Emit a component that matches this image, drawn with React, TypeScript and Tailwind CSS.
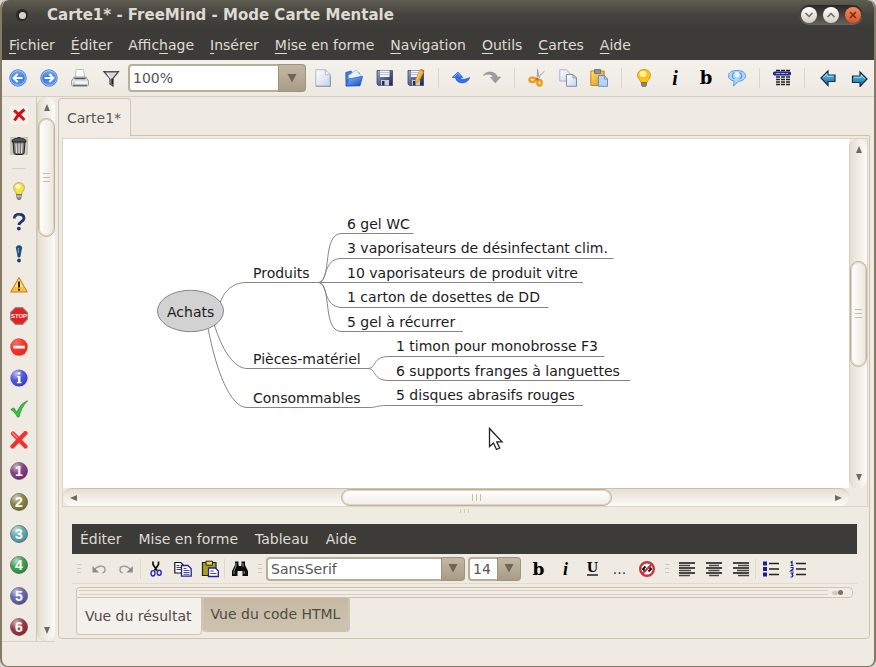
import type { ReactNode } from 'react';

type Kids = { children: ReactNode };

function Icon({ children }: Kids) {
  return (
    <svg width="18" height="18" viewBox="0 0 18 18" fill="none" aria-hidden="true">
      {children}
    </svg>
  );
}

/* ---------- Toolbar icons ---------- */

const Gradients = () => (
  <svg width="0" height="0" className="absolute" aria-hidden="true">
    <defs>
      <linearGradient id="blueBall" x1="0" y1="0" x2="0" y2="1">
        <stop offset="0" stopColor="#7fb0f2" />
        <stop offset="0.5" stopColor="#3a78e0" />
        <stop offset="1" stopColor="#5d9bf0" />
      </linearGradient>
      <linearGradient id="paper" x1="0" y1="0" x2="1" y2="1">
        <stop offset="0" stopColor="#ffffff" />
        <stop offset="1" stopColor="#c9d2ea" />
      </linearGradient>
      <linearGradient id="disk" x1="0" y1="0" x2="1" y2="1">
        <stop offset="0" stopColor="#9aa4cc" />
        <stop offset="1" stopColor="#1c2148" />
      </linearGradient>
      <linearGradient id="folder" x1="0" y1="0" x2="1" y2="1">
        <stop offset="0" stopColor="#8fc1f7" />
        <stop offset="1" stopColor="#1448c8" />
      </linearGradient>
      <linearGradient id="gold" x1="0" y1="0" x2="1" y2="1">
        <stop offset="0" stopColor="#ffe46b" />
        <stop offset="1" stopColor="#e08a12" />
      </linearGradient>
      <linearGradient id="teal" x1="0" y1="0" x2="0" y2="1">
        <stop offset="0" stopColor="#6fc4ea" />
        <stop offset="1" stopColor="#0f6aa8" />
      </linearGradient>
      <radialGradient id="shine" cx="0.35" cy="0.25" r="0.8">
        <stop offset="0" stopColor="#ffffff" stopOpacity="0.65" />
        <stop offset="0.5" stopColor="#ffffff" stopOpacity="0.1" />
        <stop offset="1" stopColor="#000000" stopOpacity="0.15" />
      </radialGradient>
    </defs>
  </svg>
);

const Previous = () => (
  <Icon>
    <circle cx="9" cy="9" r="8.2" fill="url(#blueBall)" stroke="#4a7fdb" />
    <circle cx="9" cy="9" r="7.3" stroke="#b9d3fa" strokeWidth="0.7" />
    <path d="M13.5 9H5M8.6 5 4.6 9l4 4" stroke="#fff" strokeWidth="2.2" />
  </Icon>
);
const Next = () => (
  <Icon>
    <circle cx="9" cy="9" r="8.2" fill="url(#blueBall)" stroke="#4a7fdb" />
    <circle cx="9" cy="9" r="7.3" stroke="#b9d3fa" strokeWidth="0.7" />
    <path d="M4.5 9H13M9.4 5l4 4-4 4" stroke="#fff" strokeWidth="2.2" />
  </Icon>
);
const Printer = () => (
  <Icon>
    <path d="M5 .5h7.5l1 8h-9z" fill="#fdfdfd" stroke="#b5b5b5" strokeWidth="0.8" />
    <path d="M3 8h12l2.5 4v4l-1 1h-15l-1-1v-4z" fill="#dcdcdc" stroke="#8a8a8a" strokeWidth="0.8" />
    <path d="M3.5 9.5h11" stroke="#555" strokeWidth="1.6" />
    <path d="M1.5 12.500h15v2h-15z" fill="#fafafa" />
    <path d="M2 16.500h14" stroke="#6b6b6b" strokeWidth="1.300" />
    <path d="M2 14h2" stroke="#5cd65c" />
  </Icon>
);
const Filter = () => (
  <Icon>
    <path d="M2 2.5h14.5l-5.5 7V17l-3-2V9.5z" fill="#d9d9d9" stroke="#3c3c3c" strokeWidth="1.2" />
    <path d="M3 2.8h12.5" stroke="#555" strokeWidth="1.6" />
    <path d="M10.2 9.5V15" stroke="#222" strokeWidth="1.8" />
    <path d="M5 4.5l3.5 5" stroke="#fff" />
  </Icon>
);
const NewPage = () => (
  <Icon>
    <path d="M1.8.8h9.5l5 5v11.4H1.8z" fill="url(#paper)" stroke="#a9b0c4" strokeWidth="0.9" />
    <path d="M11.3.8v5h5z" fill="#f4f6fc" stroke="#a9b0c4" strokeWidth="0.8" />
    <path d="M2 17.3h14.4V7" stroke="#7f88a6" strokeWidth="0.8" />
  </Icon>
);
const Open = () => (
  <Icon>
    <path d="M.8 3.5 6 2l1.500 2h7v12.500L1 17z" fill="#3d79de" stroke="#2a5ac0" strokeWidth="0.8" />
    <path d="M3.500 6.500 11 1l5.500 6L11 12H4z" fill="#eef2fd" stroke="#9aa9cf" strokeWidth="0.7" />
    <path d="M4.5 9.500c5 0 6-1.500 13-2l-2.500 9.300H1z" fill="url(#folder)" stroke="#1d4fc4" strokeWidth="0.7" />
  </Icon>
);
const DiskBody = () => (
  <>
    <path d="M1 1.5h15.5v15H2.5L1 15z" fill="url(#disk)" stroke="#3b4168" strokeWidth="0.8" />
    <path d="M4 1.5h9.500V8H4z" fill="#f2f4fb" />
    <path d="M4 3.5h9.500M4 5.500h9.500" stroke="#a6acc6" strokeWidth="0.7" />
    <path d="M5 11h8v5.500H5z" fill="#c4cadf" />
    <path d="M6 12h2.500v4.500H6z" fill="#252a50" />
  </>
);
const Save = () => (
  <Icon>
    <DiskBody />
  </Icon>
);
const SaveAs = () => (
  <Icon>
    <DiskBody />
    <path d="M13 .800 16.800 2.800l-5 9.500-3.300 2 .200-4z" fill="url(#gold)" stroke="#c98a1a" strokeWidth="0.6" />
    <path d="M13 .800 16.800 2.800l.700-1.300L14 0z" fill="#e0605a" />
  </Icon>
);
const UndoBlue = () => (
  <Icon>
    <path d="M0 8.500 6 3l5 5.500H8c1 2.400 4.500 2.400 9.800 0-2 7-13.300 7.500-14.300 0z" fill="#2f6ff0" stroke="#1f55cc" strokeWidth="0.6" />
    <path d="M2 7.800 6 4.200l2.500 3" stroke="#86b0ff" />
  </Icon>
);
const RedoGray = () => (
  <Icon>
    <path d="M.3 6.500C3 1.500 12.500 1.500 14.300 8h3.400l-5.500 6L7.500 8h3C9 4.800 4.500 4.500.3 6.500z" fill="#9d9d9d" stroke="#858585" strokeWidth="0.5" />
  </Icon>
);
const Scissors = () => (
  <Icon>
    <path d="M9.500 0 11.500 9 9 10z" fill="#a7abc0" stroke="#85899c" strokeWidth="0.5" />
    <path d="M16.500 2 9.500 10.500l-1.500-1z" fill="#d5d8e6" stroke="#9a9eb2" strokeWidth="0.5" />
    <ellipse cx="4.500" cy="10.800" rx="3.100" ry="2.200" stroke="#f09a16" strokeWidth="2.3" />
    <ellipse cx="11.500" cy="13.800" rx="2.200" ry="2.800" stroke="#f09a16" strokeWidth="2.3" />
    <circle cx="9" cy="10.300" r="1.300" fill="#c06d08" />
  </Icon>
);
const CopyPages = () => (
  <Icon>
    <path d="M.8.800h6.500l3.500 3.500V12H.8z" fill="url(#paper)" stroke="#98a1bd" strokeWidth="0.8" />
    <path d="M7.500 5.500H14l3.500 3.500v8.300h-10z" fill="url(#paper)" stroke="#7580a5" strokeWidth="0.9" />
    <path d="M14 5.500V9h3.500z" fill="#dfe5f5" stroke="#7580a5" strokeWidth="0.7" />
  </Icon>
);
const PasteGold = () => (
  <Icon>
    <path d="M.8 2h13.400v14.500H.8z" fill="url(#gold)" stroke="#c07a14" strokeWidth="0.9" />
    <path d="M4.500.500h6V4.500h-6z" fill="#8e8e98" stroke="#5c5c66" strokeWidth="0.7" />
    <path d="M8.500 6.500h6L17.500 10v7.300h-9z" fill="#b9d2f7" stroke="#5b88cf" strokeWidth="0.9" />
    <path d="M14.300 6.500V10h3" stroke="#5b88cf" strokeWidth="0.8" />
  </Icon>
);
const BulbGold = () => (
  <Icon>
    <path d="M9 .500c4 0 6.500 2.500 6.500 6 0 3-3 4.500-3.500 7H6C5.500 11 2.500 9.500 2.500 6.500c0-3.500 2.500-6 6.500-6z" fill="#fcc414" stroke="#e08c10" strokeWidth="0.9" />
    <ellipse cx="8" cy="5" rx="3.500" ry="3" fill="#fff3a0" />
    <path d="M6.500 13.500h5v3L10 17.700H8l-1.500-1.200z" fill="#8a8573" stroke="#55503f" strokeWidth="0.6" />
  </Icon>
);
const Bubble = () => (
  <Icon>
    <path d="M9 1.500c5 0 8.600 2 8.600 5.200S14.500 12 10.500 12.300L5.500 17l.7-5C2.500 11.500.4 9.500.4 6.700.4 3.500 4 1.500 9 1.500z" fill="#b3d6fb" stroke="#5a96e6" />
    <path d="M6.500 3.500c-3 1.500-3 5 0 6.500M11.500 3.500c3 1.500 3 5 0 6.500" stroke="#5a96e6" strokeWidth="1.200" />
    <ellipse cx="9" cy="5.500" rx="2.500" ry="2.500" fill="#e9f4ff" />
  </Icon>
);
const TableIcon = () => (
  <Icon>
    <path d="M3 1.500h14M3 8h14M3 10.500h14M3 13h14M3 15.500h14" stroke="#222" strokeWidth="1.3" strokeDasharray="4 1" />
    <rect x="0.5" y="3" width="17" height="3" rx="1" fill="#3a3ab0" stroke="#11117c" />
    <path d="M3 4.500h12" stroke="#b9b9ea" strokeWidth="0.9" strokeDasharray="4 1" />
  </Icon>
);
const BackTeal = () => (
  <Icon>
    <path d="M2 9 9 2v4h7v6.500H9v4z" fill="url(#teal)" stroke="#12303f" strokeWidth="1.2" />
    <path d="M4 8.500 8 4.800v2.400h6.500" stroke="#a8e2f8" strokeWidth="0.9" />
  </Icon>
);
const ForwardTeal = () => (
  <Icon>
    <path d="M17 10 10 3v4H2.500v6.500H10v4z" fill="url(#teal)" stroke="#12303f" strokeWidth="1.2" />
    <path d="M4 8.300h7.200V6l4 4" stroke="#a8e2f8" strokeWidth="0.9" />
  </Icon>
);

/* ---------- Node icons (left palette) ---------- */

const RemoveLast = () => (
  <Icon>
    <path d="M0 0h18v18H0z" fill="#f5f2ee" />
    <path d="M4 4.500c3 2 7 6 10.500 9.500M14.500 3.500C11 6 7 10 4.500 14.500" stroke="#d40e0e" strokeWidth="2.8" />
  </Icon>
);
const Trash = () => (
  <Icon>
    <path d="M0 0h18v18H0z" fill="#c9c5bb" />
    <path d="M3 4.500h12l-1 12-2 1H6l-2-1z" fill="#777" stroke="#222" />
    <path d="M2 3.500C4 1.500 6 1.500 6.500 1.500S7 .500 9 .500s2 1 2.500 1S14 1.500 16 3.500v1.500H2z" fill="#555" stroke="#1a1a1a" strokeWidth="0.9" />
    <path d="M6 6.500l.5 9.500M9 6.500V16M12 6.500l-.5 9.500" stroke="#e4e4e4" strokeWidth="1.2" />
  </Icon>
);
const Idea = () => (
  <Icon>
    <path d="M9 .800c3.800 0 5.300 2.500 5.300 5 0 2.700-2.500 4-2.800 6.700h-5C6.200 9.800 3.700 8.500 3.700 5.800c0-2.500 1.500-5 5.300-5z" fill="#f8e43c" stroke="#a9a376" strokeWidth="0.9" />
    <ellipse cx="8" cy="4.500" rx="2.500" ry="2.300" fill="#fffbc0" />
    <path d="M6.500 12.500h5l-.5 3.500-1 1.700H8L7 16z" fill="#8d8f8c" stroke="#55595c" strokeWidth="0.6" />
    <path d="M6.800 14.200h4.400" stroke="#d9d9d9" />
  </Icon>
);
const Help = () => (
  <Icon>
    <path d="M4.300 5.500C4.500 2.500 6.500 1.400 9.200 1.400c3 0 4.800 1.600 4.800 3.900C14 8.500 9.200 8.600 8.800 12" stroke="#1c356f" strokeWidth="2.8" />
    <circle cx="8.800" cy="15.600" r="1.9" fill="#1c356f" />
    <path d="M5.500 4.500C6 2.500 8.500 2 10 2.300" stroke="#5f80bf" strokeWidth="0.9" />
  </Icon>
);
const Important = () => (
  <Icon>
    <path d="M6.300 2.500c0-2.300 5.400-2.300 5.400 0L9.900 12H8.100z" fill="#1c4f8c" stroke="#143058" strokeWidth="0.7" />
    <circle cx="9" cy="15.500" r="1.900" fill="#1c4474" />
    <path d="M8.300 3v5" stroke="#6fb0d8" />
  </Icon>
);
const Warning = () => (
  <Icon>
    <path d="M9 1.500 17.300 16H.7z" fill="#f9c23a" stroke="#c27d1f" strokeLinejoin="round" />
    <path d="M9 3.500 13 11H5z" fill="#fde68a" />
    <path d="M9 5.500v6" stroke="#222" strokeWidth="2" />
    <circle cx="9" cy="13.700" r="1.1" fill="#222" />
  </Icon>
);
const Stop = () => (
  <Icon>
    <path d="M5.500.600h7l4.900 4.900v7l-4.900 4.900h-7L.6 12.500v-7z" fill="#e62020" stroke="#8f8686" strokeWidth="1.2" />
    <text x="9" y="11.200" textAnchor="middle" fontSize="6" fontWeight="700" fill="#ffe9e9" className="font-['Liberation_Sans',sans-serif]">STOP</text>
  </Icon>
);
const Closed = () => (
  <Icon>
    <circle cx="9" cy="9" r="8.700" fill="#f42a1e" />
    <circle cx="9" cy="9" r="8.700" fill="url(#shine)" opacity="0.5" />
    <path d="M3.200 7.700h11.600v2.800H3.200z" fill="#fff" />
  </Icon>
);
const Info = () => (
  <Icon>
    <circle cx="9" cy="9" r="8.600" fill="#3c42d8" />
    <circle cx="9" cy="9" r="8.600" fill="url(#shine)" />
    <circle cx="9" cy="4.300" r="1.400" fill="#fff" />
    <path d="M9.200 7v7" stroke="#fff" strokeWidth="2.4" />
    <path d="M7 7.600h2.500M6.800 13.600h4.800" stroke="#fff" strokeWidth="1.200" />
  </Icon>
);
const Check = () => (
  <Icon>
    <path d="M.8 9.500 4 8l3 4.500C9 7 12 3 17.500.800 13 5 10.500 10.500 9 17H7.500C6 14 3.500 11 .8 9.500z" fill="#2fcf3c" stroke="#3f7a43" strokeWidth="0.8" />
  </Icon>
);
const Cross = () => (
  <Icon>
    <path d="M3 2.500 15.500 15.500M15.500 2 2.500 15.500" stroke="#f03232" strokeWidth="4.2" strokeLinecap="round" />
    <path d="M2.500 2 7 6.500" stroke="#ff8a80" strokeWidth="1.5" strokeLinecap="round" />
  </Icon>
);
function NumberBall({ n, color }: { n: number; color: string }) {
  return (
    <Icon>
      <circle cx="9" cy="9" r="8.500" fill={color} stroke="#55505a" strokeWidth="0.7" />
      <circle cx="9" cy="9" r="8.500" fill="url(#shine)" />
      <text x="9" y="14" textAnchor="middle" fontSize="14" fontWeight="700" fill="#fff" className="font-['Liberation_Sans',sans-serif]">{n}</text>
    </Icon>
  );
}

/* ---------- Editor toolbar icons ---------- */

const UndoSmall = () => (
  <Icon>
    <path d="M4 11C6 5.500 15.500 4 15 10c0 1.500-1 2.500-2.500 3" stroke="#9b9b97" strokeWidth="1.4" />
    <path d="M2.500 6v6.500H9z" fill="#8c8c88" />
  </Icon>
);
const RedoSmall = () => (
  <Icon>
    <path d="M14 11C12 5.500 2.500 4 3 10c0 1.500 1 2.500 2.500 3" stroke="#9b9b97" strokeWidth="1.4" />
    <path d="M15.800 6v6.500H9.300z" fill="#8c8c88" />
  </Icon>
);
const CutSmall = () => (
  <Icon>
    <path d="M6 1.500v3l4 6M11.500 1.500v3l-4 6" stroke="#111" strokeWidth="1.7" />
    <ellipse cx="6" cy="13.300" rx="2" ry="2.700" stroke="#2a2ab4" strokeWidth="1.4" />
    <ellipse cx="12.200" cy="12.800" rx="2" ry="2.500" stroke="#2a2ab4" strokeWidth="1.4" />
  </Icon>
);
const CopySmall = () => (
  <Icon>
    <path d="M.8 2.500h6l3 3V13h-9z" fill="#fff" stroke="#111" strokeWidth="1.2" />
    <path d="M2.500 5.500h3M2.500 7.500h5M2.500 9.500h5" stroke="#444" />
    <path d="M7.500 5.500H14l3.200 3.200v7.500H7.500z" fill="#fff" stroke="#22229c" strokeWidth="1.3" />
    <path d="M9.500 8.500h3M9.500 10.500h6M9.500 12.500h6M9.500 14.300h6" stroke="#4a4a9c" />
  </Icon>
);
const PasteSmall = () => (
  <Icon>
    <path d="M1.500 2.500h13.500v13H1.500z" fill="#a8a01c" stroke="#222" strokeWidth="1.2" />
    <path d="M5 1.200h6.500v4H5z" fill="#e5db3c" stroke="#222" />
    <path d="M7.500 8h6.800l3 3v5.500H7.500z" fill="#fff" stroke="#22229c" strokeWidth="1.3" />
    <path d="M9.300 11h3.500M9.300 13.500h6" stroke="#4a4a9c" />
  </Icon>
);
const Binoculars = () => (
  <Icon>
    <path d="M4 1.500h3.500V5L8 6h2l.5-1V1.500H14V5l3 6v5h-5.500v-5h-5v5H1v-5l3-6z" fill="#0c0c0c" />
    <path d="M5 3v3L3 11v3M12 3v4M13.200 11v3" stroke="#9a9a9a" strokeWidth="0.9" />
  </Icon>
);
const NoFormat = () => (
  <Icon>
    <circle cx="9" cy="9" r="6.800" fill="#fff" stroke="#c93440" strokeWidth="2.4" />
    <path d="M7.500 6.500 5 9l2.500 2.500M10.500 6.500 13 9l-2.500 2.500" stroke="#111" strokeWidth="1.9" />
    <path d="M13.500 4.500 4.500 13.500" stroke="#c93440" strokeWidth="2" />
  </Icon>
);
const AlignLeft = () => (
  <Icon>
    <path d="M1 3h16M1 8h16M1 13h16" stroke="#111" strokeWidth="1.3" />
    <path d="M1 5.500h11M1 10.500h12M1 15.500h11" stroke="#444" strokeWidth="1.3" />
  </Icon>
);
const AlignCenter = () => (
  <Icon>
    <path d="M1 3h16M1 8h16M1 13h16" stroke="#111" strokeWidth="1.3" />
    <path d="M4 5.500h10M3.500 10.500h11M4 15.500h10" stroke="#444" strokeWidth="1.3" />
  </Icon>
);
const AlignRight = () => (
  <Icon>
    <path d="M1 3h16M1 8h16M1 13h16" stroke="#111" strokeWidth="1.3" />
    <path d="M6 5.500h11M5 10.500h12M6 15.500h11" stroke="#444" strokeWidth="1.3" />
  </Icon>
);
const Bullets = () => (
  <Icon>
    <path d="M1 1.500h4v4H1zM1 7h4v4H1zM1 12.500h4v4H1z" fill="#1c1c96" />
    <path d="M7 3.500h10M7 9h10M7 14.500h10" stroke="#222" strokeWidth="1.5" />
  </Icon>
);
const Numbers = () => (
  <Icon>
    <path d="M1.500 2.500 3 1.500v4M1.500 5.500h3M1.500 7.500H4V9L1.500 11H4.500M1.500 13H4l-1 1.500 1 1.200-1 1.300H1.500" stroke="#1c1c96" strokeWidth="1.2" />
    <path d="M7 3.500h10M7 9h10M7 14.500h10" stroke="#222" strokeWidth="1.5" />
  </Icon>
);

/* ---------- Shared controls ---------- */

function ToolButton({ label, children }: Kids & { label: string }) {
  return (
    <button type="button" aria-label={label} className="flex h-7 w-[31px] shrink-0 items-center justify-center">
      {children}
    </button>
  );
}

function EditButton({ label, children }: Kids & { label: string }) {
  return (
    <button type="button" aria-label={label} className="flex h-6 w-[27px] shrink-0 items-center justify-center">
      {children}
    </button>
  );
}

const ToolSeparator = () => (
  <div className="flex w-[15px] justify-center">
    <div className="h-5 w-px bg-[#ddd5c8]" />
  </div>
);
const EditSeparator = () => (
  <div className="flex w-[3px] shrink-0 justify-center">
    <div className="h-5 w-px bg-[#dfd8cc]" />
  </div>
);
const Grip = () => (
  <div className="flex w-[13px] shrink-0 flex-col items-center gap-[3px]">
    <div className="h-px w-1 bg-[#d3c7b3]" />
    <div className="h-px w-1 bg-[#d3c7b3]" />
    <div className="h-px w-1 bg-[#d3c7b3]" />
  </div>
);

function Combo({ label, options, size, arrow }: { label: string; options: string[]; size: string; arrow: string }) {
  return (
    <div className={`relative shrink-0 ${size}`}>
      <select aria-label={label} className="h-full w-full appearance-none rounded-[4px] border-2 border-[#b9ae98] bg-white px-[3px] text-[#555555] outline-none">
        {options.map((o) => (
          <option key={o}>{o}</option>
        ))}
      </select>
      <span className={`pointer-events-none absolute inset-y-0 right-0 flex items-center justify-center rounded-r-[4px] border border-[#a0937d] bg-linear-to-b from-[#c3b8a5] to-[#a99c87] ${arrow}`}>
        <svg width="10" height="9" viewBox="0 0 10 9" aria-hidden="true">
          <path d="M.5 0h9L5 8.500z" fill="#6f6656" />
        </svg>
      </span>
    </div>
  );
}

const arrowPaths = {
  up: 'M4 0 7 7H1z',
  down: 'M1 0h6L4 7z',
  left: 'M0 4 7 1v6z',
  right: 'M0 1v6l7-3z',
};

function ArrowButton({ dir, label }: { dir: keyof typeof arrowPaths; label: string }) {
  return (
    <button type="button" aria-label={label} className="flex size-[21px] shrink-0 items-center justify-center">
      <svg width="8" height="8" viewBox="0 0 8 8" aria-hidden="true">
        <path d={arrowPaths[dir]} fill="#6d6a63" />
      </svg>
    </button>
  );
}

function VerticalBar({ thumb, centered, label }: { thumb: string; centered: boolean; label: string }) {
  return (
    <div aria-label={label} className="flex w-[18px] shrink-0 flex-col items-center rounded-[9px] border-l border-[#d8cdba] bg-linear-to-r from-[#e6ded2] to-[#fcfbf9]">
      <ArrowButton dir="up" label="Défiler vers le haut" />
      {centered && <div className="flex-1" />}
      <div className={`flex w-[17px] flex-col items-center justify-center gap-[3px] rounded-full border border-[#bfb299] bg-linear-to-r from-white to-[#ece7de] ring-1 ring-[#ddd4c5] ring-inset ${thumb}`}>
        <div className="h-px w-[7px] bg-[#c9bda7]" />
        <div className="h-px w-[7px] bg-[#c9bda7]" />
        <div className="h-px w-[7px] bg-[#c9bda7]" />
      </div>
      <div className="flex-1" />
      <ArrowButton dir="down" label="Défiler vers le bas" />
    </div>
  );
}

/* ---------- Window parts ---------- */

function TitleBar() {
  return (
    <header className="flex h-[30px] shrink-0 items-center rounded-t-[7px] bg-linear-to-b from-[#5f5c52] via-[#45433d] to-[#3c3b37] pr-[11px] pl-[14px]">
      <span className="flex size-3 items-center justify-center rounded-full bg-[#2a2926]">
        <span className="size-[7px] rounded-full bg-[#d8d3c8]" />
      </span>
      <h1 className="ml-[19px] flex-1 text-[15px] leading-5 font-bold text-[#dfdbd2]">Carte1* - FreeMind - Mode Carte Mentale</h1>
      <div className="flex h-5 items-center gap-[6px] rounded-full bg-linear-to-b from-[#282724] to-[#66645c] px-[2px]">
        <button type="button" aria-label="Réduire" className="flex size-4 items-center justify-center rounded-full bg-linear-to-b from-white to-[#d3cec4]">
          <svg width="8" height="6" viewBox="0 0 8 6" fill="none"><path d="M.5 1 4 4.500 7.500 1" stroke="#6b675e" strokeWidth="1.5" /></svg>
        </button>
        <button type="button" aria-label="Agrandir" className="flex size-4 items-center justify-center rounded-full bg-linear-to-b from-white to-[#d3cec4]">
          <svg width="8" height="6" viewBox="0 0 8 6" fill="none"><path d="M.5 5 4 1.500 7.500 5" stroke="#6b675e" strokeWidth="1.5" /></svg>
        </button>
        <button type="button" aria-label="Fermer" className="flex size-4 items-center justify-center rounded-full bg-linear-to-b from-[#f58a62] to-[#d9501f]">
          <svg width="8" height="8" viewBox="0 0 8 8" fill="none"><path d="M1 1l6 6M7 1 1 7" stroke="#6b2c16" strokeWidth="1.5" /></svg>
        </button>
      </div>
    </header>
  );
}

const menus: [string, string, string][] = [
  ['', 'F', 'ichier'],
  ['', 'É', 'diter'],
  ['Affic', 'h', 'age'],
  ['', 'I', 'nsérer'],
  ['', 'M', 'ise en forme'],
  ['', 'N', 'avigation'],
  ['', 'O', 'utils'],
  ['', 'C', 'artes'],
  ['', 'A', 'ide'],
];

function MainMenu() {
  return (
    <nav className="flex h-[30px] shrink-0 items-center gap-4 bg-[#3c3b37] px-[7px] text-[#dfdbd2]">
      {menus.map(([before, key, after]) => (
        <button type="button" key={key + after} className="whitespace-nowrap">
          {before}
          <span className="underline underline-offset-3">{key}</span>
          {after}
        </button>
      ))}
    </nav>
  );
}

function MainToolbar() {
  return (
    <div className="flex h-[37px] shrink-0 items-center border-b border-[#d9cfc0] bg-linear-to-b from-[#f4f1ec] to-[#eeeae2]">
      <ToolButton label="Précédent"><Previous /></ToolButton>
      <ToolButton label="Suivant"><Next /></ToolButton>
      <ToolButton label="Imprimer"><Printer /></ToolButton>
      <ToolButton label="Filtrer"><Filter /></ToolButton>
      <div className="mr-px ml-[2px] flex">
        <Combo label="Zoom" options={['100%', '150%', '200%']} size="h-7 w-[178px]" arrow="w-7" />
      </div>
      <ToolButton label="Nouveau"><NewPage /></ToolButton>
      <ToolButton label="Ouvrir"><Open /></ToolButton>
      <ToolButton label="Enregistrer"><Save /></ToolButton>
      <ToolButton label="Enregistrer sous"><SaveAs /></ToolButton>
      <ToolSeparator />
      <ToolButton label="Annuler"><UndoBlue /></ToolButton>
      <ToolButton label="Rétablir"><RedoGray /></ToolButton>
      <ToolSeparator />
      <ToolButton label="Couper"><Scissors /></ToolButton>
      <ToolButton label="Copier"><CopyPages /></ToolButton>
      <ToolButton label="Coller"><PasteGold /></ToolButton>
      <ToolSeparator />
      <ToolButton label="Idée"><BulbGold /></ToolButton>
      <ToolButton label="Italique">
        <span className="font-['Liberation_Serif',serif] text-[20px] leading-5 font-bold text-black italic">i</span>
      </ToolButton>
      <ToolButton label="Gras">
        <span className="font-['DejaVu_Serif',serif] text-[18px] leading-5 font-bold text-black">b</span>
      </ToolButton>
      <ToolButton label="Nuage"><Bubble /></ToolButton>
      <ToolSeparator />
      <ToolButton label="Attributs"><TableIcon /></ToolButton>
      <ToolSeparator />
      <ToolButton label="Reculer"><BackTeal /></ToolButton>
      <ToolButton label="Avancer"><ForwardTeal /></ToolButton>
    </div>
  );
}

const palette: [string, ReactNode][] = [
  ['Idée', <Idea />],
  ['Question', <Help />],
  ['Important', <Important />],
  ['Attention', <Warning />],
  ['Stop', <Stop />],
  ['Interdit', <Closed />],
  ['Information', <Info />],
  ['Correct', <Check />],
  ['Incorrect', <Cross />],
  ['Priorité 1', <NumberBall n={1} color="#7a2a78" />],
  ['Priorité 2', <NumberBall n={2} color="#7f7a2c" />],
  ['Priorité 3', <NumberBall n={3} color="#4fa3ab" />],
  ['Priorité 4', <NumberBall n={4} color="#279a3c" />],
  ['Priorité 5', <NumberBall n={5} color="#5558ac" />],
  ['Priorité 6', <NumberBall n={6} color="#962430" />],
];

function Palette() {
  return (
    <aside className="flex shrink-0 border-b border-[#dcd2c3]">
      <div className="flex w-[35px] flex-col items-center justify-between border-r border-[#d3c7b4] pt-[9px] pb-[5px]">
        <button type="button" aria-label="Supprimer la dernière icône"><RemoveLast /></button>
        <button type="button" aria-label="Supprimer toutes les icônes"><Trash /></button>
        <div className="h-px w-[14px] bg-[#d9cfc0]" />
        {palette.map(([label, icon]) => (
          <button type="button" key={label} aria-label={label}>{icon}</button>
        ))}
      </div>
      <VerticalBar label="Défilement des icônes" thumb="h-[119px]" centered={false} />
    </aside>
  );
}

const nodes: [string, string][] = [
  ['Achats', 'left-[104px] top-[163px]'],
  ['Produits', 'left-[190px] top-[124px]'],
  ['Pièces-matériel', 'left-[190px] top-[210px]'],
  ['Consommables', 'left-[190px] top-[249px]'],
  ['6 gel WC', 'left-[284px] top-[75px]'],
  ['3 vaporisateurs de désinfectant clim.', 'left-[284px] top-[99px]'],
  ['10 vaporisateurs de produit vitre', 'left-[284px] top-[124px]'],
  ['1 carton de dosettes de DD', 'left-[284px] top-[148px]'],
  ['5 gel à récurrer', 'left-[284px] top-[173px]'],
  ['1 timon pour monobrosse F3', 'left-[333px] top-[197px]'],
  ['6 supports franges à languettes', 'left-[333px] top-[222px]'],
  ['5 disques abrasifs rouges', 'left-[333px] top-[246px]'],
];

function MindMap() {
  return (
    <main className="relative min-h-[300px] min-w-0 overflow-hidden bg-white text-[#1c1c1c]">
      <svg width="786" height="348" viewBox="63 139 786 348" fill="none" stroke="#868686" className="absolute top-0 left-0" aria-hidden="true">
        <path d="M220 303C225 288 236 282.500 246 282.500H583" />
        <path d="M214 324C222 350 234 368.500 247 368.500H368" />
        <path d="M208 328C216 370 230 407.500 247 407.500H369C378 407.500 374 405.500 388 405.500H583" />
        <path d="M319 282.500C332 280 322 234.500 341 233.500H413.500" />
        <path d="M319 282.500C328 280 323 259 341 258.500H613.500" />
        <path d="M319 282.500C328 285 323 306 341 307.500H548.500" />
        <path d="M319 282.500C332 285 322 330.500 341 331.500H463" />
        <path d="M368 368.500C377 368 372 357 388 356.500H604.500" />
        <path d="M368 368.500C377 369 372 380 388 380.500H630" />
        <ellipse cx="190.500" cy="311" rx="33" ry="20.700" fill="#d2d2d2" />
        <path d="M489.500 428.500v18l4-3.500 3 6.500 3.200-1.500-3-6.200h5.300z" fill="#fff" stroke="#222" strokeWidth="1.3" />
      </svg>
      {nodes.map(([text, place]) => (
        <span key={text} className={`absolute leading-5 whitespace-nowrap ${place}`}>{text}</span>
      ))}
    </main>
  );
}

function HorizontalBar() {
  return (
    <div aria-label="Défilement horizontal" className="flex min-w-0 items-center rounded-full border-t border-[#cdc1ac] bg-linear-to-b from-[#e6ded2] to-[#fcfbf9]">
      <ArrowButton dir="left" label="Défiler vers la gauche" />
      <div className="grow-259" />
      <div className="flex h-[17px] w-[271px] shrink-0 items-center justify-center gap-[3px] rounded-full border border-[#bfb299] bg-linear-to-b from-white to-[#f1ede6] ring-1 ring-[#ddd4c5] ring-inset">
        <div className="h-[7px] w-px bg-[#c9bda7]" />
        <div className="h-[7px] w-px bg-[#c9bda7]" />
        <div className="h-[7px] w-px bg-[#c9bda7]" />
      </div>
      <div className="grow-217" />
      <ArrowButton dir="right" label="Défiler vers la droite" />
    </div>
  );
}

function NoteEditor() {
  return (
    <section className="mr-3 ml-[13px] flex flex-col">
      <nav className="flex h-[30px] items-center gap-[17px] bg-[#3c3b37] px-2 text-[#dfdbd2]">
        {['Éditer', 'Mise en forme', 'Tableau', 'Aide'].map((m) => (
          <button type="button" key={m} className="whitespace-nowrap">{m}</button>
        ))}
      </nav>
      <div className="flex h-[30px] items-center border-b border-[#e2dbcf]">
        <Grip />
        <EditButton label="Annuler"><UndoSmall /></EditButton>
        <EditButton label="Rétablir"><RedoSmall /></EditButton>
        <EditSeparator />
        <EditButton label="Couper"><CutSmall /></EditButton>
        <EditButton label="Copier"><CopySmall /></EditButton>
        <EditButton label="Coller"><PasteSmall /></EditButton>
        <EditSeparator />
        <EditButton label="Rechercher"><Binoculars /></EditButton>
        <Grip />
        <div className="flex gap-[3px] pr-1">
          <Combo label="Police" options={['SansSerif', 'Serif', 'Monospaced']} size="h-6 w-[199px]" arrow="w-6" />
          <Combo label="Taille" options={['14', '16', '18']} size="h-6 w-[53px]" arrow="w-6" />
        </div>
        <EditButton label="Gras"><span className="font-['DejaVu_Serif',serif] text-[17px] leading-5 font-bold text-black">b</span></EditButton>
        <EditButton label="Italique"><span className="font-['Liberation_Serif',serif] text-[18px] leading-5 font-bold text-black italic">i</span></EditButton>
        <EditButton label="Souligné"><span className="border-b-2 border-[#555555] font-['DejaVu_Serif',serif] text-[13px] leading-[13px] font-bold text-black">U</span></EditButton>
        <EditButton label="Plus"><span className="text-[#333333]">...</span></EditButton>
        <EditButton label="Effacer le format"><NoFormat /></EditButton>
        <Grip />
        <EditButton label="Aligner à gauche"><AlignLeft /></EditButton>
        <EditButton label="Centrer"><AlignCenter /></EditButton>
        <EditButton label="Aligner à droite"><AlignRight /></EditButton>
        <EditSeparator />
        <EditButton label="Liste à puces"><Bullets /></EditButton>
        <EditButton label="Liste numérotée"><Numbers /></EditButton>
      </div>
      <div className="mx-1 mt-[3px] flex h-[11px] items-center rounded-t-[4px] rounded-br-[4px] border border-[#cfc4b0] bg-[#f1ede6] px-[2px]">
        <div className="h-[5px] flex-1 border-y border-[#d9cfbf]" />
        <div className="ml-1 h-1 w-[6px] rounded-full bg-[#d5cab6]" />
        <div className="mr-[7px] size-[5px] rounded-full bg-[#77736a]" />
      </div>
      <div className="mx-1 flex items-start text-[#4f4b45]">
        <button type="button" className="h-[37px] rounded-b-[4px] border border-t-0 border-[#cfc4b0] bg-[#f4f1ec] pr-[10px] pl-2">Vue du résultat</button>
        <button type="button" className="h-[34px] rounded-b-[4px] border-2 border-t-0 border-[#d0c4b0] bg-linear-to-b from-[#c5b9a2] to-[#cec3af] pr-2 pl-[6px]">Vue du code HTML</button>
      </div>
    </section>
  );
}

export default function App() {
  return (
    <div className="flex min-h-screen flex-col bg-[#d9d6d1] font-['DejaVu_Sans','Noto_Sans',sans-serif] text-[14px] leading-5">
      <Gradients />
      <div className="flex flex-1 flex-col overflow-hidden rounded-[8px] border-x-2 border-b border-[#857a66] bg-[#efebe3]">
        <TitleBar />
        <MainMenu />
        <MainToolbar />
        <div className="flex flex-1">
          <Palette />
          <div className="flex min-w-0 flex-1 flex-col pt-px pr-1 pb-[3px] pl-[3px]">
            <div className="relative z-10 -mb-px flex">
              <button type="button" className="h-[38px] rounded-t-[4px] border-x border-t border-[#cfc4b0] bg-[#f1ede6] pr-[9px] pl-2 text-[#5a564f]">Carte1*</button>
            </div>
            <div className="flex flex-1 flex-col rounded-b-[4px] border border-[#cfc4b0] pb-[3px]">
              <div className="mt-[2px] mr-px ml-[3px] grid flex-1 grid-cols-[1fr_18px] grid-rows-[1fr_18px] border border-[#ddd4c5]">
                <MindMap />
                <VerticalBar label="Défilement vertical" thumb="h-[106px]" centered />
                <HorizontalBar />
                <div />
              </div>
              <div className="flex h-[17px] items-start justify-center gap-[3px] pt-[2px]">
                <div className="h-1 w-px bg-[#d3c7b3]" />
                <div className="h-1 w-px bg-[#d3c7b3]" />
                <div className="h-1 w-px bg-[#d3c7b3]" />
              </div>
              <NoteEditor />
            </div>
          </div>
        </div>
        <div className="h-6 shrink-0" />
      </div>
    </div>
  );
}
